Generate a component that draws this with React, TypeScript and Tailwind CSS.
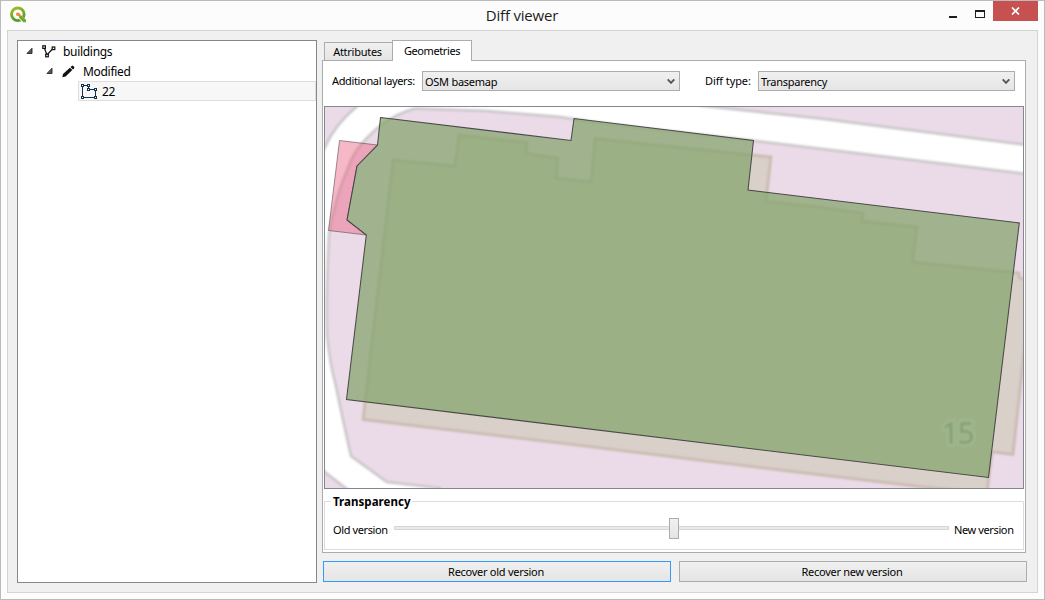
import type { ReactNode } from "react";

function QgisLogo() {
  return (
    <svg width="17" height="17" viewBox="0 0 17 17" className="block">
      <defs>
        <linearGradient id="ring" x1="0" y1="0" x2="0.4" y2="1">
          <stop offset="0" stopColor="#9fbf1f" />
          <stop offset="1" stopColor="#5a9a32" />
        </linearGradient>
      </defs>
      <circle cx="7.800" cy="8.300" r="6.300" fill="none" stroke="url(#ring)" strokeWidth="2.900" />
      <path d="M8.600 9.600L14.800 15.800" stroke="#fcfcfc" strokeWidth="4.200" />
      <path d="M9.200 9.400h2.300l4.500 4.400v2.500h-2.600L9.200 12z" fill="#74a92e" />
      <path d="M6.200 6.800h2.900l1.500 1.700v1.700H9L6.200 9.600z" fill="#f0883a" />
    </svg>
  );
}

function Expander() {
  return (
    <svg width="8" height="8" viewBox="0 0 8 8" className="block">
      <path d="M7 1.200v5.300H2z" fill="#595959" stroke="#262626" strokeWidth="0.900" />
    </svg>
  );
}

function LineLayerIcon() {
  return (
    <svg width="14" height="13" viewBox="0 0 14 13" className="block">
      <path d="M2.5 3.5l2.5 6.5l5.5-6" fill="none" stroke="#111" strokeWidth="1.2" />
      <g fill="#fff" stroke="#111" strokeWidth="1.2">
        <rect x="0.8" y="0.800" width="2.6" height="2.6" />
        <rect x="3.7" y="9.2" width="2.6" height="2.6" />
        <rect x="10.2" y="2" width="2.6" height="2.6" />
      </g>
    </svg>
  );
}

function PencilIcon() {
  return (
    <svg width="13" height="13" viewBox="0 0 13 13" className="block">
      <path d="M0.300 12.300l0.700-3.300L7.900 2.700l2.400 2.400-6.700 6.400z" fill="#111" />
      <path d="M8.500 2.100l1.300-1.200q.7-.6 1.400 0l.9.9q.6.7 0 1.400l-1.200 1.300z" fill="#111" />
    </svg>
  );
}

function PolygonIcon() {
  return (
    <svg width="17" height="15" viewBox="0 0 17 15" className="block">
      <path d="M1.500 1.500h6v4h7v8h-13z" fill="none" stroke="#14304f" strokeWidth="1" />
      <g fill="#fff" stroke="#14304f" strokeWidth="1">
        <rect x="0.5" y="0.5" width="2" height="2" />
        <rect x="6.500" y="0.5" width="2" height="2" />
        <rect x="6.500" y="4.500" width="2" height="2" />
        <rect x="13.500" y="4.500" width="2" height="2" />
        <rect x="0.5" y="12.500" width="2" height="2" />
        <rect x="13.500" y="12.500" width="2" height="2" />
      </g>
    </svg>
  );
}

function TitleBar() {
  return (
    <header className="flex h-[29px] shrink-0 items-start">
      <div className="w-[120px] pt-[5px] pl-[3px]">
        <QgisLogo />
      </div>
      <h1 className="flex-1 pt-[4px] pr-px text-center font-['Open_Sans',sans-serif] text-[15px] leading-[20px] tracking-[-0.2px] text-[#1c1c1c]">
        Diff viewer
      </h1>
      <div className="flex w-[120px] justify-end">
        <button aria-label="Minimize" className="h-5 w-[27px] pt-[12px] pl-[9px]">
          <span className="block h-[2px] w-[8px] bg-[#1e1e1e]" />
        </button>
        <button aria-label="Maximize" className="h-5 w-[26px] pt-[6px] pl-[8px]">
          <span className="block h-[8px] w-[10px] border border-t-2 border-[#1e1e1e]" />
        </button>
        <button aria-label="Close" className="flex h-5 w-[45px] items-center justify-center bg-[#c75050]">
          <svg width="9" height="8" viewBox="0 0 9 8">
            <path d="M1 0.500l7 7M8 0.500l-7 7" stroke="#fff" strokeWidth="1.7" />
          </svg>
        </button>
      </div>
    </header>
  );
}

function LayerTree() {
  return (
    <aside className="w-[300px] shrink-0 border border-[#828790] bg-white text-[12px] tracking-[-0.3px]">
      <div className="flex h-5 items-center pl-[7px]">
        <Expander />
        <span className="ml-[9px]"><LineLayerIcon /></span>
        <span className="ml-[7px] pt-px">buildings</span>
      </div>
      <div className="flex h-5 items-center pl-[27px]">
        <Expander />
        <span className="ml-[9px]"><PencilIcon /></span>
        <span className="ml-[8px] pt-px">Modified</span>
      </div>
      <div className="ml-[60px] flex h-5 items-center border border-[#dedede] bg-[#f7f7f7] pl-[2px]">
        <PolygonIcon />
        <span className="ml-[4px] pt-px">22</span>
      </div>
    </aside>
  );
}

function Combo({ value, className }: { value: string; className: string }) {
  return (
    <div className={`flex h-5 items-center justify-between border border-[#acacac] bg-linear-to-b from-[#f0f0f0] to-[#e5e5e5] pl-[2px] pr-[4px] ${className}`}>
      <span className="pt-px">{value}</span>
      <svg width="8" height="6" viewBox="0 0 8 6">
        <path d="M0.700 1.300L4 4.800L7.300 1.300" fill="none" stroke="#555" strokeWidth="1.9" />
      </svg>
    </div>
  );
}

const BLOCK =
  "M1035 175L843 151.500L760 141.500L640 128L593 122L560 117L487 111L415 108.500Q395 114 380 126Q357 145 350 163Q334 200 329 235Q326 290 327 335Q330 365 335.500 384Q344 425 351 456L387 482L440 488L440 500H1035Z";

const BUILDING =
  "M363 419.500L393 160L455 166L459 135L527 142.500L526 153.500L558 158L556 178L591 181.500L595 138.500L771 157L766 201.500L820 207L863 213L862 221L917 227L912.500 262L1019 273L1019.500 278L1032 280L1013 454.500L992 452L987 493L923 487L800 472.500L580 445.500Z";

const NEW_SHAPE =
  "380.500,117.500 571,140.500 574,118.500 753.500,140.500 748,190 1019.300,223 988.500,477.500 346.500,399.500 366.300,235 347,220 357,166 377.500,145";

const REMOVED_SHAPE =
  "339.500,140.500 377.500,145 357,166 347,220 366.300,235 328.500,230.500";

function MapCanvas() {
  return (
    <div className="h-[383px] border border-[#828790]">
      <svg width="698" height="381" viewBox="325 107 698 381" className="block">
        <defs>
          <filter id="soft" x="-5%" y="-5%" width="110%" height="110%">
            <feGaussianBlur stdDeviation="0.8" />
          </filter>
        </defs>
        <rect x="325" y="107" width="698" height="381" fill="#fff" />
        <g filter="url(#soft)">
          <g fill="#ebdbe8" stroke="#c8c4c7" strokeWidth="2.500">
            <path d={BLOCK} />
            <path d="M320 100H362L356 107Q334 126 325 147L320 156Z" />
            <path d="M700 105.500L820 118.500L1035 146V95H700Z" />
            <path d="M318 466L326 473L348 490L350 500H318Z" />
          </g>
          <path d={BUILDING} fill="#d9d0c9" stroke="#c8b8ac" strokeWidth="2.600" />
          <text
            x="941.500"
            y="444"
            fontFamily="Noto Sans, sans-serif"
            fontSize="30"
            fontWeight="500"
            textLength="33"
            fill="#8d9388"
            stroke="#e8eae4"
            strokeWidth="5"
            strokeLinejoin="round"
            paintOrder="stroke"
          >
            15
          </text>
        </g>
        <polygon points={REMOVED_SHAPE} fill="#ea5d7d" fillOpacity="0.44" stroke="#4a3f44" strokeOpacity="0.55" strokeWidth="1" />
        <polygon points={NEW_SHAPE} fill="#83a36b" fillOpacity="0.72" stroke="#3c3c3c" strokeOpacity="0.9" strokeWidth="1.050" />
      </svg>
    </div>
  );
}

function TransparencyGroup() {
  return (
    <fieldset className="mt-[7px] h-[54px]">
      <div className="flex h-[11px] items-start">
        <span className="mt-[5px] h-px w-[7px] bg-[#dcdcdc]" />
        <span className="w-[81px] pl-[2px] text-[11.500px] leading-[11px] font-bold tracking-[0.050px]">Transparency</span>
        <div className="mt-[5px] h-[6px] flex-1 border-t border-r border-[#dcdcdc]" />
      </div>
      <div className="-mt-[5px] flex h-[48px] items-center border border-t-0 border-[#dcdcdc] px-[8px] pt-[5px] pb-px tracking-[-0.38px]">
        <span className="w-[61px] pt-[4px]">Old version</span>
        <div className="relative h-1 flex-1 border border-[#d6d6d6] bg-[#e7eaea]">
          <span className="absolute top-[-9px] left-[274px] h-[21px] w-[10px] border border-[#acacac] bg-linear-to-b from-[#f0f0f0] to-[#e5e5e5]" />
        </div>
        <span className="w-[66px] pt-[4px] pl-[5px] whitespace-nowrap">New version</span>
      </div>
    </fieldset>
  );
}

function PushButton({ children, focused = false }: { children: ReactNode; focused?: boolean }) {
  return (
    <button
      className={`h-[21px] flex-1 border bg-linear-to-b from-[#f0f0f0] to-[#e5e5e5] pt-px pr-[2px] leading-[18px] ${
        focused ? "border-[#3399ff]" : "border-[#acacac]"
      }`}
    >
      {children}
    </button>
  );
}

function DetailsPane() {
  return (
    <main className="flex w-[705px] flex-col">
      <nav className="flex h-5 items-end pl-[2px]">
        <button className="h-[18px] w-[68px] border border-r-0 border-b-0 border-[#acacac] bg-linear-to-b from-[#f0f0f0] to-[#e5e5e5] pr-[2px] leading-[18px]">
          Attributes
        </button>
        <button className="relative -mb-px flex h-[21px] w-[80px] items-start justify-center border border-b-0 border-[#acacac] bg-white pt-[2px] tracking-[-0.4px]">
          Geometries
        </button>
      </nav>
      <section className="h-[493px] w-[704px] border border-[#acacac] bg-white px-px">
        <div className="flex h-[45px] items-start pt-[10px] pl-[8px]">
          <span className="w-[90px] leading-[20px] tracking-[-0.35px]">Additional layers:</span>
          <Combo value="OSM basemap" className="w-[258px]" />
          <span className="w-[78px] pl-[25px] leading-[20px] tracking-[-0.1px] whitespace-nowrap">Diff type:</span>
          <Combo value="Transparency" className="w-[257px]" />
        </div>
        <MapCanvas />
        <TransparencyGroup />
      </section>
      <footer className="mt-[8px] flex gap-[8px] pl-px">
        <PushButton focused>Recover old version</PushButton>
        <PushButton>Recover new version</PushButton>
      </footer>
    </main>
  );
}

export default function App() {
  return (
    <div className="flex h-[600px] w-[1045px] flex-col overflow-hidden border border-[#bbbbbb] bg-[#fcfcfc] px-[6px] pb-[6px] font-['Noto_Sans',sans-serif] text-[11px] leading-[16px] tracking-[-0.27px] text-black">
      <TitleBar />
      <div className="flex flex-1 gap-[5px] border border-[#d3d3d3] bg-[#f0f0f0] px-[9px] py-[9px]">
        <LayerTree />
        <DetailsPane />
      </div>
    </div>
  );
}
